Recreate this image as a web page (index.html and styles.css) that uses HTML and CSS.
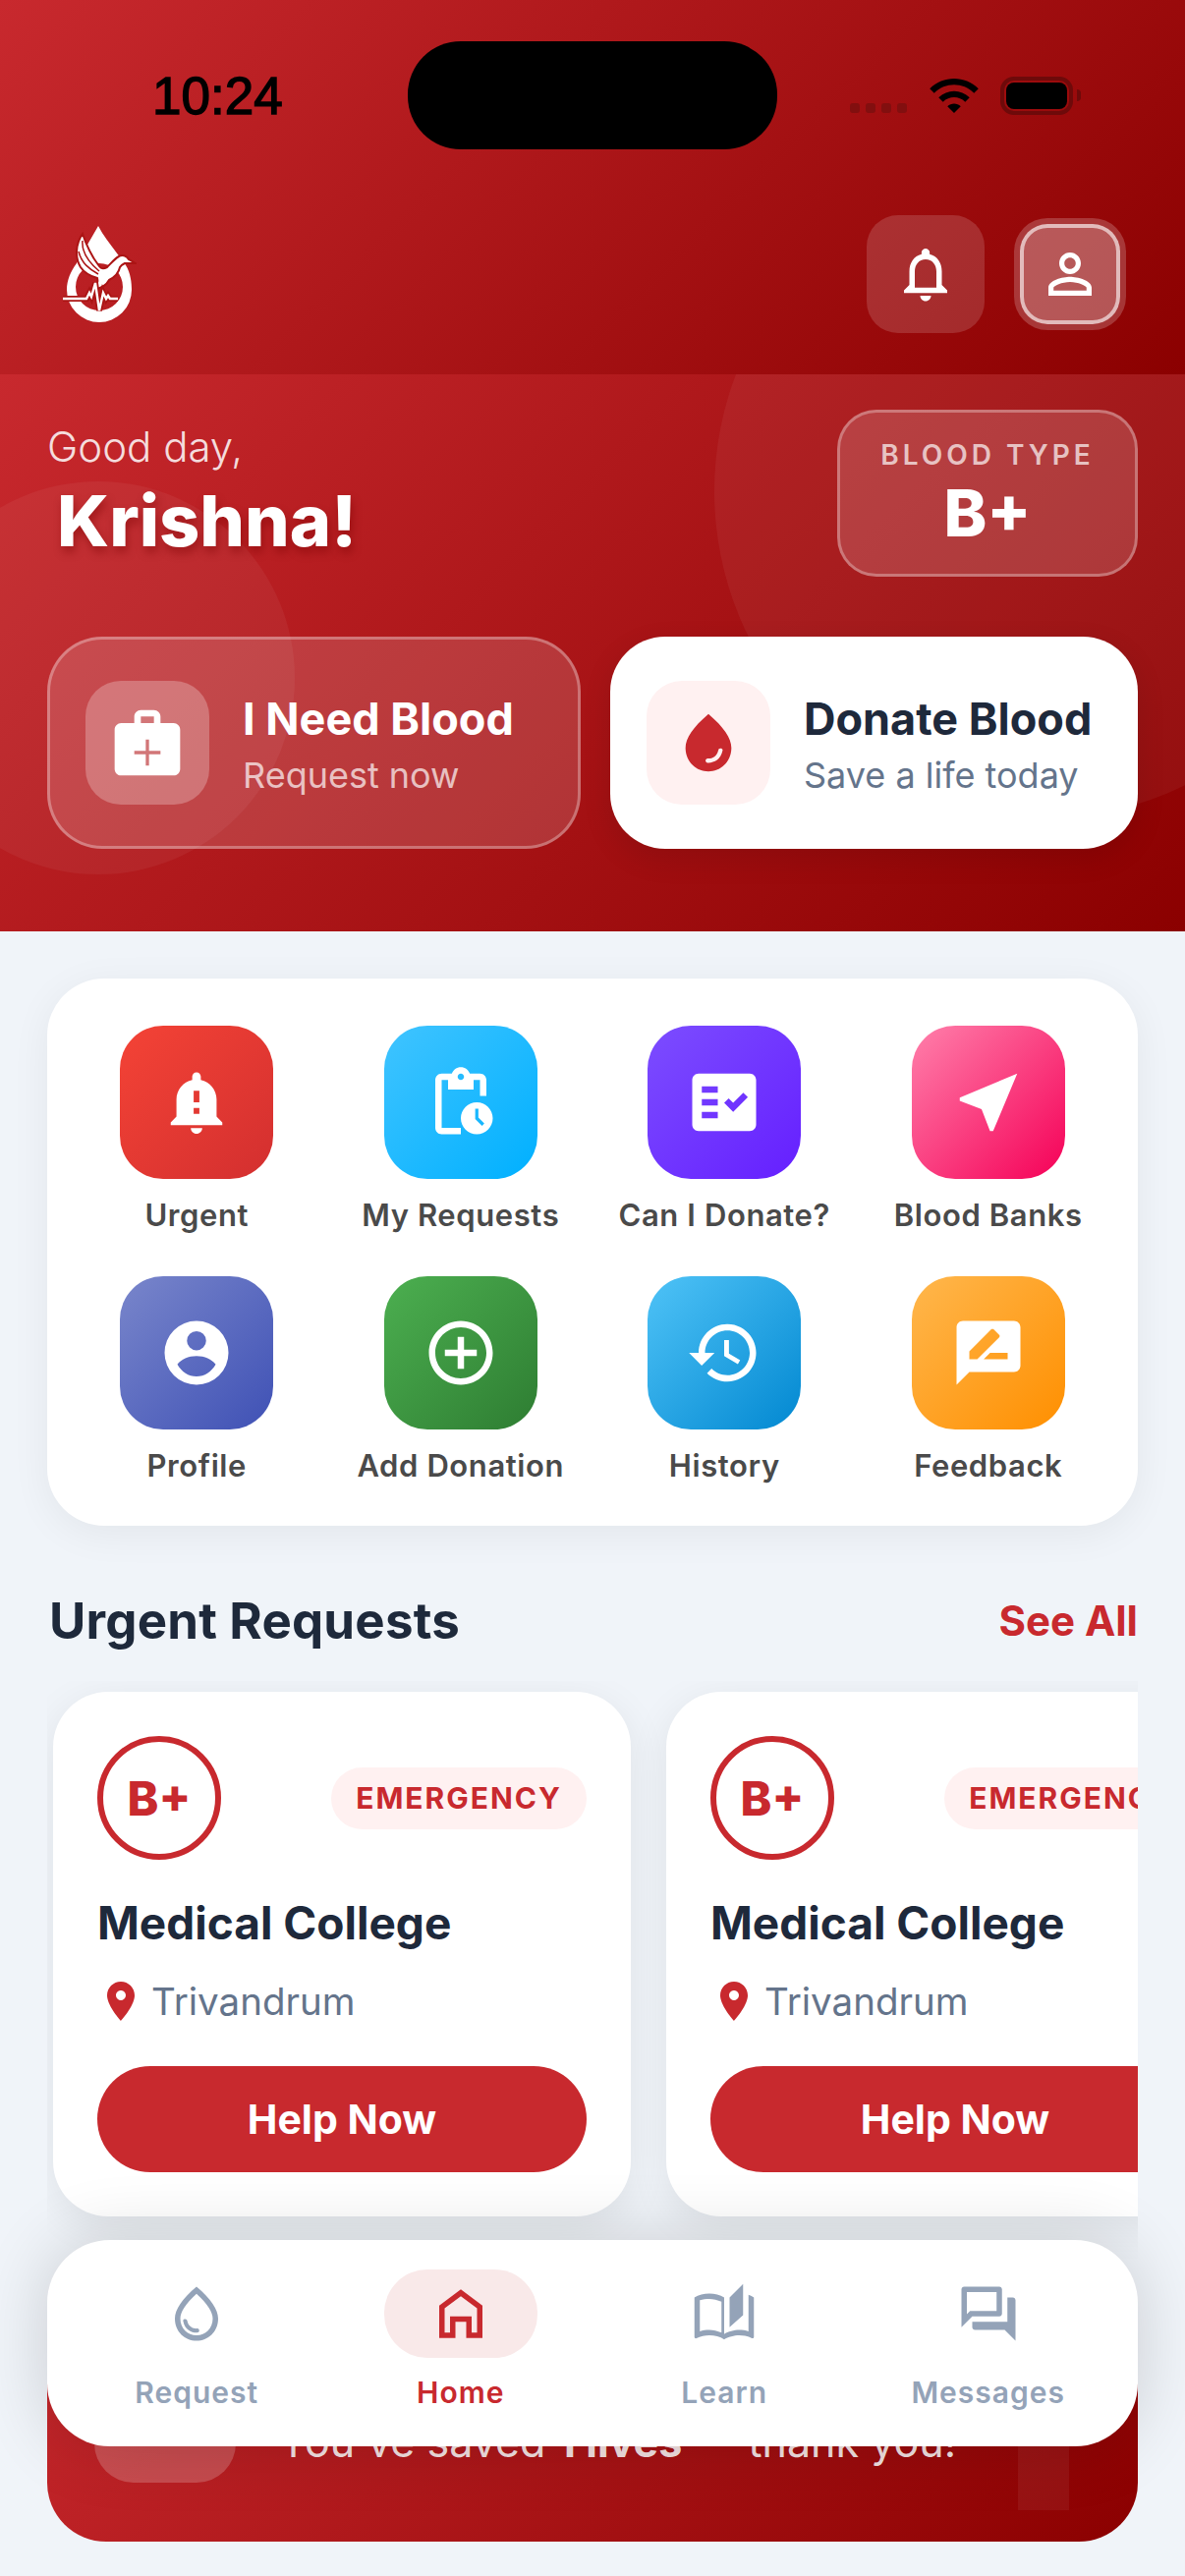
FILE: index.html
```html
<!DOCTYPE html>
<html lang="en">

<head>
    <meta charset="UTF-8">
    <meta name="viewport" content="width=device-width, initial-scale=1.0">
    <title>Blood Donation Home</title>
    <link rel="stylesheet" href="styles.css">
</head>

<body>
    <div class="app">
        <header class="topbar">
            <div class="status-bar">
                <div class="status-left">10:24</div>
                <div class="island"></div>
                <div class="status-right">
                    <div class="signal"><span></span><span></span><span></span><span></span></div>
                    <svg class="wifi" viewBox="0 0 24 24"><path d="M1 9l2 2c4.97-4.97 13.03-4.97 18 0l2-2C16.93 2.93 7.08 2.93 1 9zm8 8l3 3 3-3c-1.65-1.66-4.34-1.66-6 0zm-4-4l2 2c2.76-2.76 7.24-2.76 10 0l2-2C15.14 9.14 8.87 9.14 5 13z"/></svg>
                    <div class="battery"><div class="battery-fill"></div></div>
                    <div class="battery-nub"></div>
                </div>
            </div>
            <div class="app-bar">
                <svg class="logo" viewBox="0 0 76 98">
                    <path fill="#fff" fill-rule="evenodd" d="M37 0C45 15 57 28 65 40 70 48 71 58 71 65A33 33 0 0 1 5 65C5 55 9 46 15 38L37 0zM38 38a24 24 0 1 0 0 48 24 24 0 0 0 0-48z"/>
                    <path d="M21 8C14 18 13 32 19 42 23 48 29 51 36 53 37 57 36 61 33 65 41 63 46 59 48 55 54 52 58 47 59 42 60 40 62 39 64 38L75 38 68 34C66 30 61 29 58 31 54 33 50 38 46 42 42 44 40 44 38 41 31 32 25 20 21 8z" fill="#fff" stroke="#ab1414" stroke-width="2"/>
                    <path d="M21 15C20 26 26 36 38 46M17 26C20 38 28 44 37 49" fill="none" stroke="#ab1414" stroke-width="1.5"/>
                    <path d="M1 74H25L28 68 30 72 34 58 38 86 42 68 45 74 47 71 49 74H57" fill="none" stroke="#ab1414" stroke-width="6"/>
                    <path d="M1 74H25L28 68 30 72 34 58 38 86 42 68 45 74 47 71 49 74H57" fill="none" stroke="#fff" stroke-width="2.4"/>
                </svg>
                <div class="bar-buttons">
                    <div class="bar-btn">
                        <svg viewBox="0 0 24 24"><path d="M12 22c1.1 0 2-.9 2-2h-4c0 1.1.9 2 2 2zm6-6v-5c0-3.07-1.63-5.64-4.5-6.32V4c0-.83-.67-1.5-1.5-1.5s-1.5.67-1.5 1.5v.68C7.64 5.36 6 7.92 6 11v5l-2 2v1h16v-1l-2-2zm-2 1H8v-6c0-2.48 1.51-4.5 4-4.5s4 2.02 4 4.5v6z"/></svg>
                    </div>
                    <div class="bar-btn profile-btn">
                        <svg viewBox="0 0 24 24"><path d="M12 5.9c1.16 0 2.1.94 2.1 2.1s-.94 2.1-2.1 2.1S9.9 9.16 9.9 8s.94-2.1 2.1-2.1m0 9c2.97 0 6.1 1.46 6.1 2.1v1.1H5.9V17c0-.64 3.13-2.1 6.1-2.1M12 4C9.79 4 8 5.79 8 8s1.79 4 4 4 4-1.79 4-4-1.79-4-4-4zm0 9c-2.67 0-8 1.34-8 4v3h16v-3c0-2.66-5.33-4-8-4z"/></svg>
                    </div>
                </div>
            </div>
        </header>

        <section class="hero">
            <div class="hero-circle circle-right"></div>
            <div class="hero-circle circle-left"></div>
            <div class="hero-top">
                <div>
                    <div class="greeting">Good day,</div>
                    <div class="username">Krishna!</div>
                </div>
                <div class="blood-type">
                    <div class="blood-type-label">BLOOD TYPE</div>
                    <div class="blood-type-value">B+</div>
                </div>
            </div>
            <div class="actions">
                <div class="action-card action-glass">
                    <div class="action-icon">
                        <svg viewBox="0 0 24 24"><path d="M20 6h-4V4c0-1.1-.9-2-2-2h-4c-1.1 0-2 .9-2 2v2H4c-1.1 0-2 .9-2 2v12c0 1.1.9 2 2 2h16c1.1 0 2-.9 2-2V8c0-1.1-.9-2-2-2zM10 4h4v2h-4V4zm6 11.5h-3.5V19h-1v-3.500H8v-1h3.500V11h1v3.500H16v1z"/></svg>
                    </div>
                    <div class="action-text">
                        <div class="action-title">I Need Blood</div>
                        <div class="action-sub">Request now</div>
                    </div>
                </div>
                <div class="action-card action-white">
                    <div class="action-icon">
                        <svg class="flip" viewBox="0 0 24 24"><path d="M12 2c-5.33 4.55-8 8.48-8 11.8 0 4.98 3.8 8.2 8 8.2s8-3.22 8-8.2c0-3.32-2.67-7.25-8-11.8zM7.83 14c.37 0 .67.26.74.62.41 2.22 2.28 2.98 3.64 2.87.43-.02.79.32.79.75 0 .4-.32.73-.72.75-2.13.13-4.62-1.09-5.23-4.3-.08-.48.3-.69.78-.69z"/></svg>
                    </div>
                    <div class="action-text">
                        <div class="action-title">Donate Blood</div>
                        <div class="action-sub">Save a life today</div>
                    </div>
                </div>
            </div>
        </section>

        <main class="content">
            <div class="quick-grid">
                <div class="quick-item">
                    <div class="quick-icon q-red"><svg class="small" viewBox="0 0 24 24"><path d="M12 23c1.1 0 1.99-.89 1.99-1.99h-3.98c0 1.100.89 1.990 1.990 1.990zm7-6v-6c0-3.350-2.360-6.150-5.500-6.830V3c0-.83-.67-1.500-1.500-1.500s-1.500.67-1.500 1.500v1.170C7.360 4.850 5 7.650 5 11v6l-2 2v1h18v-1l-2-2zm-6-1h-2v-2h2v2zm0-4h-2V8h2v4z"/></svg></div>
                    <span>Urgent</span>
                </div>
                <div class="quick-item">
                    <div class="quick-icon q-sky"><svg viewBox="0 0 24 24"><path d="M17 12c-2.760 0-5 2.240-5 5s2.240 5 5 5 5-2.240 5-5-2.240-5-5-5zm1.650 7.350L16.500 17.200V14h1v2.790l1.850 1.850-.7.71zM18 3h-3.180C14.400 1.840 13.300 1 12 1s-2.400.84-2.820 2H6c-1.100 0-2 .9-2 2v15c0 1.100.9 2 2 2h6v-2H6V5h2v3h8V5h2v5h2V5c0-1.100-.9-2-2-2zm-6 2c-.55 0-1-.45-1-1s.45-1 1-1 1 .45 1 1-.45 1-1 1z"/></svg></div>
                    <span>My Requests</span>
                </div>
                <div class="quick-item">
                    <div class="quick-icon q-purple"><svg viewBox="0 0 24 24"><path d="M20 3H4c-1.100 0-2 .9-2 2v14c0 1.100.9 2 2 2h16c1.100 0 2-.9 2-2V5c0-1.100-.9-2-2-2zM10 17H5v-2h5v2zm0-4H5v-2h5v2zm0-4H5V7h5v2zm4.820 6L12 12.160l1.410-1.410 1.410 1.420L17.990 9l1.420 1.420L14.820 15z"/></svg></div>
                    <span>Can I Donate?</span>
                </div>
                <div class="quick-item">
                    <div class="quick-icon q-pink"><svg viewBox="0 0 24 24"><path d="M21 3L3 10.530v.98l6.840 2.650L12.480 21h.98L21 3z"/></svg></div>
                    <span>Blood Banks</span>
                </div>
                <div class="quick-item">
                    <div class="quick-icon q-indigo"><svg viewBox="0 0 24 24"><path fill-rule="evenodd" d="M12 2a10 10 0 1 0 0 20 10 10 0 0 0 0-20zm0 3.200a3 3 0 1 1 0 6 3 3 0 0 1 0-6zm0 7.800c2.600 0 4.700 1 6 2.600-1.300 2.300-3.500 3.800-6 3.800s-4.700-1.500-6-3.800c1.300-1.600 3.400-2.600 6-2.600z"/></svg></div>
                    <span>Profile</span>
                </div>
                <div class="quick-item">
                    <div class="quick-icon q-green"><svg viewBox="0 0 24 24"><path d="M13 7h-2v4H7v2h4v4h2v-4h4v-2h-4V7zm-1-5C6.480 2 2 6.480 2 12s4.480 10 10 10 10-4.480 10-10S17.520 2 12 2zm0 18c-4.410 0-8-3.590-8-8s3.590-8 8-8 8 3.590 8 8-3.590 8-8 8z"/></svg></div>
                    <span>Add Donation</span>
                </div>
                <div class="quick-item">
                    <div class="quick-icon q-blue"><svg viewBox="0 0 24 24"><path d="M13 3c-4.970 0-9 4.030-9 9H1l3.890 3.890.07.14L9 12H6c0-3.870 3.130-7 7-7s7 3.130 7 7-3.130 7-7 7c-1.930 0-3.680-.79-4.940-2.060l-1.420 1.420C8.270 19.990 10.510 21 13 21c4.970 0 9-4.030 9-9s-4.030-9-9-9zm-1 5v5l4.280 2.540.72-1.210-3.500-2.080V8H12z"/></svg></div>
                    <span>History</span>
                </div>
                <div class="quick-item">
                    <div class="quick-icon q-orange"><svg viewBox="0 0 24 24"><path d="M20 2H4c-1.100 0-1.990.9-1.990 2L2 22l4-4h14c1.100 0 2-.9 2-2V4c0-1.100-.9-2-2-2zM6 14v-2.470l6.880-6.880c.2-.2.51-.2.71 0l1.770 1.770c.2.2.2.51 0 .71L8.470 14H6zm12 0h-7.500l2-2H18v2z"/></svg></div>
                    <span>Feedback</span>
                </div>
            </div>

            <div class="section-head">
                <h2>Urgent Requests</h2>
                <a class="see-all">See All</a>
            </div>

            <div class="requests">
                <div class="request-card">
                    <div class="request-top">
                        <div class="blood-circle">B+</div>
                        <div class="badge">EMERGENCY</div>
                    </div>
                    <div class="request-title">Medical College</div>
                    <div class="request-place">
                        <svg viewBox="0 0 24 24"><path d="M12 2C8.130 2 5 5.130 5 9c0 5.250 7 13 7 13s7-7.750 7-13c0-3.870-3.130-7-7-7zm0 9.500c-1.380 0-2.500-1.120-2.500-2.500s1.120-2.500 2.500-2.500 2.500 1.120 2.500 2.500-1.120 2.500-2.500 2.500z"/></svg>
                        Trivandrum
                    </div>
                    <button class="help-btn">Help Now</button>
                </div>
                <div class="request-card">
                    <div class="request-top">
                        <div class="blood-circle">B+</div>
                        <div class="badge">EMERGENCY</div>
                    </div>
                    <div class="request-title">Medical College</div>
                    <div class="request-place">
                        <svg viewBox="0 0 24 24"><path d="M12 2C8.130 2 5 5.130 5 9c0 5.250 7 13 7 13s7-7.750 7-13c0-3.870-3.130-7-7-7zm0 9.500c-1.380 0-2.500-1.120-2.500-2.500s1.120-2.500 2.500-2.500 2.500 1.120 2.500 2.500-1.120 2.500-2.500 2.500z"/></svg>
                        Trivandrum
                    </div>
                    <button class="help-btn">Help Now</button>
                </div>
            </div>

            <div class="impact">
                <div class="impact-icon"></div>
                <div class="impact-text">You've saved <b>1 lives</b> — thank you!</div>
                <div class="impact-mark"></div>
            </div>
        </main>

        <nav class="bottom-nav">
            <div class="nav-item">
                <div class="nav-icon"><svg viewBox="0 0 24 24"><path d="M12 2c-5.330 4.550-8 8.480-8 11.800 0 4.980 3.800 8.200 8 8.200s8-3.220 8-8.200c0-3.320-2.670-7.250-8-11.800zm0 18c-3.350 0-6-2.570-6-6.200 0-2.340 1.950-5.440 6-9.140 4.050 3.700 6 6.790 6 9.140 0 3.630-2.650 6.200-6 6.200zm-4.170-6c.37 0 .67.26.74.62.41 2.220 2.280 2.980 3.640 2.870.43-.02.79.32.79.75 0 .4-.32.73-.72.75-2.130.13-4.620-1.090-5.230-4.300-.08-.48.3-.69.78-.69z"/></svg></div>
                <span>Request</span>
            </div>
            <div class="nav-item active">
                <div class="nav-icon"><svg viewBox="0 0 24 24"><path fill-rule="evenodd" d="M12 3L4 9v12h6v-6h4v6h6V9l-8-6zm0 2.500L18 10v9h-2v-6H8v6H6v-9l6-4.500z"/></svg></div>
                <span>Home</span>
            </div>
            <div class="nav-item">
                <div class="nav-icon"><svg viewBox="0 0 24 24"><path fill-rule="evenodd" d="M19 1l-5 5v11l5-4.500V1zM1 6v14.650c0 .25.25.5.5.5.1 0 .15-.05.25-.05C3.100 20.450 5.050 20 6.500 20c1.950 0 4.050.4 5.500 1.500 1.350-.85 3.800-1.500 5.500-1.500 1.650 0 3.350.3 4.750 1.050.1.05.15.05.25.05.25 0 .5-.25.5-.5V6c-.6-.45-1.250-.75-2-1v13.500c-1.100-.35-2.300-.5-3.500-.5-1.700 0-4.150.65-5.500 1.500V6c-1.450-1.100-3.550-1.500-5.500-1.500S2.450 4.900 1 6zm2 1c1.100-.35 2.300-.5 3.500-.5 1.340 0 3.130.41 4.500 1v11.500c-1.370-.58-3.160-1-4.500-1-1.200 0-2.400.15-3.500.5V7z"/></svg></div>
                <span>Learn</span>
            </div>
            <div class="nav-item">
                <div class="nav-icon"><svg viewBox="0 0 24 24"><path d="M15 4v7H5.170L4 12.170V4h11m1-2H3c-.55 0-1 .45-1 1v14l4-4h10c.55 0 1-.45 1-1V3c0-.55-.45-1-1-1zm5 4h-2v9H6v2c0 .55.45 1 1 1h11l4 4V7c0-.55-.45-1-1-1z"/></svg></div>
                <span>Messages</span>
            </div>
        </nav>
    </div>
</body>

</html>
```

FILE: styles.css
```css
* {
    box-sizing: border-box;
}

body {
    margin: 0;
    font-family: 'Inter', 'Noto Sans', sans-serif;
    background-color: #f0f4f9;
}

.app {
    position: relative;
    width: 1206px;
    height: 2622px;
    overflow: hidden;
    background-color: #f0f4f9;
}

/* top bar */
.topbar {
    height: 381px;
    padding-top: 42px;
    background: linear-gradient(135deg, #c8292e 0%, #8b0000 100%);
}

.status-bar {
    display: flex;
    align-items: center;
    height: 110px;
}

.status-left {
    flex: 0 0 415px;
    padding-left: 155px;
    font-family: 'Liberation Sans', sans-serif;
    font-size: 53px;
    color: #000;
    -webkit-text-stroke: 1.4px #000;
}

.island {
    width: 376px;
    height: 110px;
    border-radius: 54px;
    background-color: #000;
}

.status-right {
    flex: 0 0 415px;
    display: flex;
    align-items: center;
    padding-left: 74px;
}

.signal {
    display: flex;
    gap: 6px;
    margin-top: 26px;
}

.signal span {
    width: 10px;
    height: 10px;
    border-radius: 3px;
    background-color: #820f0f;
}

.wifi {
    width: 54px;
    height: 54px;
    margin-left: 21px;
}

.battery {
    width: 74px;
    height: 39px;
    margin-left: 20px;
    padding: 2px;
    border: 4px solid #6e0a0a;
    border-radius: 14px;
}

.battery-fill {
    height: 100%;
    border-radius: 8px;
    background-color: #000;
}

.battery-nub {
    width: 4px;
    height: 12px;
    margin-left: 4px;
    border-radius: 0 8px 8px 0;
    background-color: #6e0a0a;
}

.app-bar {
    display: flex;
    justify-content: space-between;
    align-items: center;
    margin-top: 67px;
    padding: 0 66px 0 63px;
}

.logo {
    width: 76px;
    height: 98px;
}

.bar-buttons {
    display: flex;
    align-items: center;
    gap: 36px;
}

.bar-btn {
    display: flex;
    justify-content: center;
    align-items: center;
    width: 120px;
    height: 120px;
    border-radius: 32px;
    background-color: rgba(255, 255, 255, 0.15);
}

.bar-btn svg {
    width: 66px;
    height: 66px;
    fill: #fff;
}

.profile-btn {
    width: 102px;
    height: 102px;
    border: 4px solid rgba(255, 255, 255, 0.6);
    border-radius: 28px;
    background-color: rgba(255, 255, 255, 0.33);
    box-shadow: 0 0 0 6px rgba(255, 255, 255, 0.2);
}

/* hero */
.hero {
    position: relative;
    height: 567px;
    overflow: hidden;
    padding: 36px 48px 0;
    background: linear-gradient(135deg, #c8292e 0%, #8b0000 100%);
}

.hero-circle {
    position: absolute;
    border-radius: 50%;
    background-color: rgba(255, 255, 255, 0.05);
}

.circle-right {
    left: 727px;
    top: -214px;
    width: 666px;
    height: 666px;
}

.circle-left {
    left: -100px;
    top: 109px;
    width: 400px;
    height: 400px;
}

.hero-top {
    position: relative;
    display: flex;
    justify-content: space-between;
}

.greeting {
    margin-top: 12px;
    font-size: 42px;
    font-weight: 300;
    line-height: 52px;
    color: rgba(255, 255, 255, 0.85);
}

.username {
    margin: 5px 0 0 10px;
    font-size: 72px;
    font-weight: 800;
    line-height: 88px;
    color: #fff;
    text-shadow: 2px 6px 10px rgba(120, 0, 0, 0.45);
}

.blood-type {
    width: 306px;
    height: 170px;
    padding-top: 26px;
    text-align: center;
    border: 3px solid rgba(255, 255, 255, 0.3);
    border-radius: 40px;
    background-color: rgba(255, 255, 255, 0.15);
    color: #fff;
}

.blood-type-label {
    font-size: 28px;
    font-weight: 600;
    line-height: 34px;
    letter-spacing: 4px;
    color: rgba(255, 255, 255, 0.7);
}

.blood-type-value {
    margin-top: 6px;
    font-size: 66px;
    font-weight: 800;
    line-height: 72px;
}

.actions {
    position: relative;
    display: grid;
    grid-template-columns: 543px 537px;
    gap: 30px;
    margin-top: 61px;
}

.action-card {
    display: flex;
    align-items: center;
    height: 216px;
    padding-left: 37px;
    border-radius: 56px;
}

.action-glass {
    padding-left: 36px;
    border: 3px solid rgba(255, 255, 255, 0.3);
    background-color: rgba(255, 255, 255, 0.15);
    color: #fff;
}

.action-white {
    background-color: #fff;
    box-shadow: 0 10px 30px rgba(0, 0, 0, 0.1);
    color: #1e293b;
}

.action-icon {
    display: flex;
    justify-content: center;
    align-items: center;
    width: 126px;
    height: 126px;
    margin-right: 34px;
    border-radius: 36px;
    background-color: rgba(255, 255, 255, 0.25);
}

.action-icon svg {
    width: 80px;
    height: 80px;
    fill: #fff;
}

.action-white .action-icon {
    background-color: #fff1f1;
}

.action-white .action-icon svg {
    width: 70px;
    height: 70px;
    fill: #c8292e;
}

.flip {
    transform: scaleX(-1);
}

.action-text {
    padding-top: 3px;
}

.action-title {
    font-size: 45px;
    font-weight: 700;
    line-height: 56px;
}

.action-sub {
    margin-top: 6px;
    font-size: 36px;
    line-height: 46px;
    color: rgba(255, 255, 255, 0.7);
}

.action-white .action-sub {
    color: #64748b;
}

/* content */
.content {
    padding: 48px 48px 0;
}

.quick-grid {
    display: grid;
    grid-template-columns: repeat(4, 1fr);
    align-content: start;
    row-gap: 28px;
    height: 557px;
    padding: 48px 18px 0;
    border-radius: 58px;
    background-color: #fff;
    box-shadow: 0 8px 40px rgba(0, 0, 0, 0.06);
}

.quick-item {
    display: flex;
    flex-direction: column;
    align-items: center;
    height: 227px;
    font-size: 31px;
    font-weight: 600;
    letter-spacing: 0.6px;
    color: #4a4a4a;
}

.quick-item span {
    margin-top: 18px;
    line-height: 38px;
    white-space: nowrap;
}

.quick-icon {
    display: flex;
    justify-content: center;
    align-items: center;
    width: 156px;
    height: 156px;
    border-radius: 44px;
}

.quick-icon svg {
    width: 78px;
    height: 78px;
    fill: #fff;
}

.quick-icon svg.small {
    width: 70px;
    height: 70px;
}

.q-red { background: linear-gradient(135deg, #f44336, #d32f2f); }
.q-sky { background: linear-gradient(135deg, #40c4ff, #00b0ff); }
.q-purple { background: linear-gradient(135deg, #7c4dff, #651fff); }
.q-pink { background: linear-gradient(135deg, #ff80ab, #f50057); }
.q-indigo { background: linear-gradient(135deg, #7986cb, #3f51b5); }
.q-green { background: linear-gradient(135deg, #4caf50, #2e7d32); }
.q-blue { background: linear-gradient(135deg, #4fc3f7, #0288d1); }
.q-orange { background: linear-gradient(135deg, #ffb74d, #ff8f00); }

.section-head {
    display: flex;
    justify-content: space-between;
    align-items: center;
    height: 58px;
    margin: 67px 0 33px;
}

.section-head h2 {
    margin: 0 0 0 2px;
    font-size: 51px;
    font-weight: 700;
    letter-spacing: 0.2px;
    color: #1e293b;
}

.see-all {
    font-size: 42px;
    font-weight: 700;
    color: #c8292e;
}

.requests {
    display: flex;
    gap: 36px;
    height: 612px;
    overflow: hidden;
    padding: 11px 6px 0;
}

.request-card {
    flex: 0 0 588px;
    height: 534px;
    padding: 45px;
    border-radius: 56px;
    background-color: #fff;
    box-shadow: 0 10px 40px rgba(0, 0, 0, 0.08);
}

.request-top {
    display: flex;
    justify-content: space-between;
    align-items: center;
}

.blood-circle {
    display: flex;
    justify-content: center;
    align-items: center;
    width: 126px;
    height: 126px;
    border: 6px solid #c8292e;
    border-radius: 50%;
    font-size: 48px;
    font-weight: 800;
    color: #c8292e;
}

.badge {
    display: flex;
    align-items: center;
    height: 63px;
    padding: 0 25px;
    border-radius: 32px;
    background-color: #fff1f1;
    font-size: 30px;
    font-weight: 700;
    letter-spacing: 2px;
    color: #c8292e;
}

.request-title {
    margin-top: 36px;
    font-size: 46px;
    font-weight: 700;
    line-height: 56px;
    color: #1e293b;
}

.request-place {
    display: flex;
    align-items: center;
    height: 48px;
    margin: 28px 0 0;
    font-size: 38.5px;
    color: #64748b;
}

.request-place svg {
    width: 48px;
    height: 48px;
    margin: 0 7px 0 0;
    fill: #c8292e;
}

.help-btn {
    display: block;
    width: 498px;
    height: 108px;
    margin-top: 42px;
    border: none;
    border-radius: 54px;
    background-color: #c8292e;
    font-family: inherit;
    font-size: 41px;
    font-weight: 700;
    color: #fff;
}

/* impact banner, mostly under the nav */
.impact {
    position: relative;
    display: flex;
    align-items: flex-end;
    height: 264px;
    padding: 0 48px 60px;
    border-radius: 60px;
    background: linear-gradient(135deg, #c8292e 0%, #8b0000 100%);
    color: rgba(255, 255, 255, 0.9);
}

.impact-icon {
    flex: 0 0 144px;
    height: 144px;
    margin-right: 44px;
    border-radius: 40px;
    background-color: rgba(255, 255, 255, 0.2);
}

.impact-text {
    margin-bottom: 17px;
    font-size: 43px;
    line-height: 50px;
    white-space: nowrap;
}

.impact-mark {
    position: absolute;
    right: 70px;
    bottom: 32px;
    width: 52px;
    height: 120px;
    background-color: rgba(255, 255, 255, 0.06);
}

/* bottom nav */
.bottom-nav {
    position: absolute;
    left: 48px;
    bottom: 132px;
    display: grid;
    grid-template-columns: repeat(4, 1fr);
    width: 1110px;
    height: 210px;
    padding: 0 18px;
    border-radius: 64px;
    background-color: #fff;
    box-shadow: 0 0 70px rgba(0, 0, 0, 0.16);
}

.nav-item {
    display: flex;
    flex-direction: column;
    align-items: center;
    padding-top: 30px;
    font-size: 30px;
    font-weight: 600;
    letter-spacing: 1px;
    color: #94a3b8;
}

.nav-item span {
    margin-top: 17px;
    line-height: 36px;
}

.nav-icon {
    display: flex;
    justify-content: center;
    align-items: center;
    width: 156px;
    height: 90px;
    border-radius: 44px;
}

.nav-icon svg {
    width: 66px;
    height: 66px;
    fill: #94a3b8;
}

.active {
    color: #c8292e;
}

.active .nav-icon {
    background-color: #f9e9e9;
}

.active .nav-icon svg {
    fill: #c8292e;
}
```
